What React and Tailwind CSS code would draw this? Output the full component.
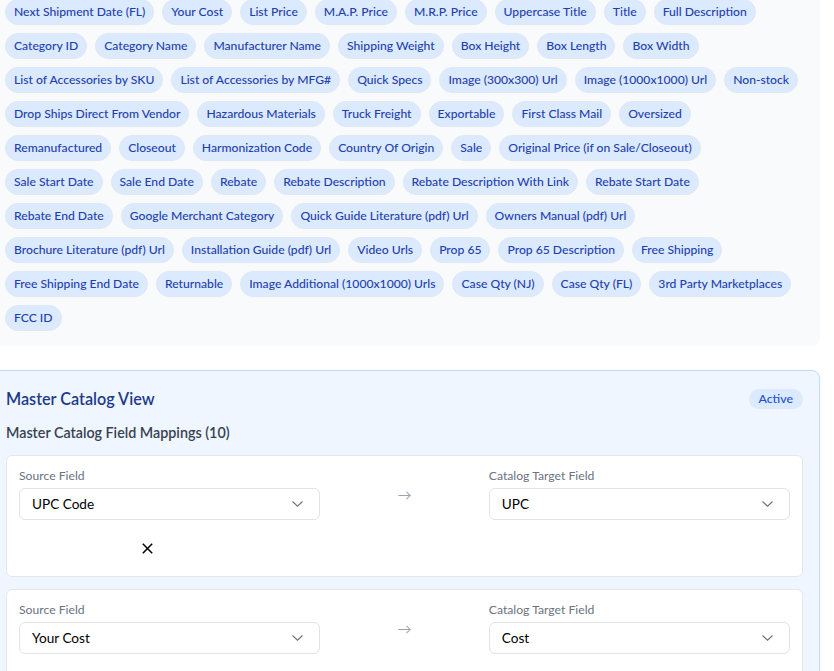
import React from "react";

const fields = [
  "Next Shipment Date (FL)", "Your Cost", "List Price", "M.A.P. Price", "M.R.P. Price", "Uppercase Title", "Title", "Full Description",
  "Category ID", "Category Name", "Manufacturer Name", "Shipping Weight", "Box Height", "Box Length", "Box Width",
  "List of Accessories by SKU", "List of Accessories by MFG#", "Quick Specs", "Image (300x300) Url", "Image (1000x1000) Url", "Non-stock",
  "Drop Ships Direct From Vendor", "Hazardous Materials", "Truck Freight", "Exportable", "First Class Mail", "Oversized",
  "Remanufactured", "Closeout", "Harmonization Code", "Country Of Origin", "Sale", "Original Price (if on Sale/Closeout)",
  "Sale Start Date", "Sale End Date", "Rebate", "Rebate Description", "Rebate Description With Link", "Rebate Start Date",
  "Rebate End Date", "Google Merchant Category", "Quick Guide Literature (pdf) Url", "Owners Manual (pdf) Url",
  "Brochure Literature (pdf) Url", "Installation Guide (pdf) Url", "Video Urls", "Prop 65", "Prop 65 Description", "Free Shipping",
  "Free Shipping End Date", "Returnable", "Image Additional (1000x1000) Urls", "Case Qty (NJ)", "Case Qty (FL)", "3rd Party Marketplaces",
  "FCC ID",
];

const mappings = [
  ["UPC Code", "UPC"],
  ["Your Cost", "Cost"],
  ["List Price", "MSRP"],
  ["Title", "Product Name"],
];

function Chevron() {
  return (
    <svg width="11" height="6" viewBox="0 0 11 6" fill="none" className="shrink-0">
      <polyline points="0.5,0.5 5.5,5.2 10.5,0.5" stroke="#6b7280" strokeWidth="1.1" />
    </svg>
  );
}

function SelectBox({ value }) {
  return (
    <div className="flex h-8 items-center justify-between rounded-md border border-[#e1e3e7] bg-white pl-3 pr-4">
      <span className="text-[13.6px] leading-5 text-black">{value}</span>
      <Chevron />
    </div>
  );
}

function MappingCard({ source, target }) {
  return (
    <div className="rounded-md border border-[#e5e7eb] bg-white p-3">
      <div className="grid grid-cols-5 gap-3">
        <div className="col-span-2">
          <div className="mb-1 text-[12.2px] leading-4 text-[#6b7280]">Source Field</div>
          <SelectBox value={source} />
        </div>
        <div className="col-span-1 flex items-center justify-center pt-0.5 text-sm text-[#9ca3af]">→</div>
        <div className="col-span-2">
          <div className="mb-1 text-[12.2px] leading-4 text-[#6b7280]">Catalog Target Field</div>
          <SelectBox value={target} />
        </div>
        <div className="col-span-1 flex justify-end">
          <button className="flex h-8 w-8 items-center justify-center text-black">
            <svg width="11" height="11" viewBox="0 0 11 11" fill="none">
              <path d="M0.8 0.8 L10.2 10.2 M10.2 0.8 L0.8 10.2" stroke="#000" strokeWidth="1.5" />
            </svg>
          </button>
        </div>
      </div>
    </div>
  );
}

export default function App() {
  return (
    <div className="min-h-screen bg-white" style={{ fontFamily: "Lato, 'Noto Sans', sans-serif" }}>
      <div className="-ml-[11px] -mt-[17px] w-[831px]">
        <div className="rounded-lg bg-[#f8fafc] px-4 pt-4 pb-[15px]">
          <div className="flex flex-wrap gap-2">
            {fields.map((f) => (
              <span
                key={f}
                className="rounded-full border border-[#e2e8f0] bg-[#dbeafe] px-2 py-1 text-[12.15px] font-medium leading-4 text-[#1e40af]"
              >
                {f}
              </span>
            ))}
          </div>
        </div>

        <div className="mt-6 rounded-lg border border-[#bfdbfe] bg-[#eff6ff] p-4">
          <div className="flex items-center justify-between">
            <h2 className="text-[16.2px] font-semibold leading-6 text-[#1e3a8a]">Master Catalog View</h2>
            <span className="rounded-full bg-[#dbeafe] px-2.5 py-0.5 text-[12.3px] font-medium leading-4 text-[#1d4ed8]">
              Active
            </span>
          </div>
          <h3 className="mt-3 mb-3 text-[14.3px] font-semibold leading-5 text-[#374151]">
            Master Catalog Field Mappings (10)
          </h3>
          <div className="flex flex-col gap-3">
            {mappings.map(([s, t]) => (
              <MappingCard key={s} source={s} target={t} />
            ))}
          </div>
        </div>
      </div>
    </div>
  );
}
